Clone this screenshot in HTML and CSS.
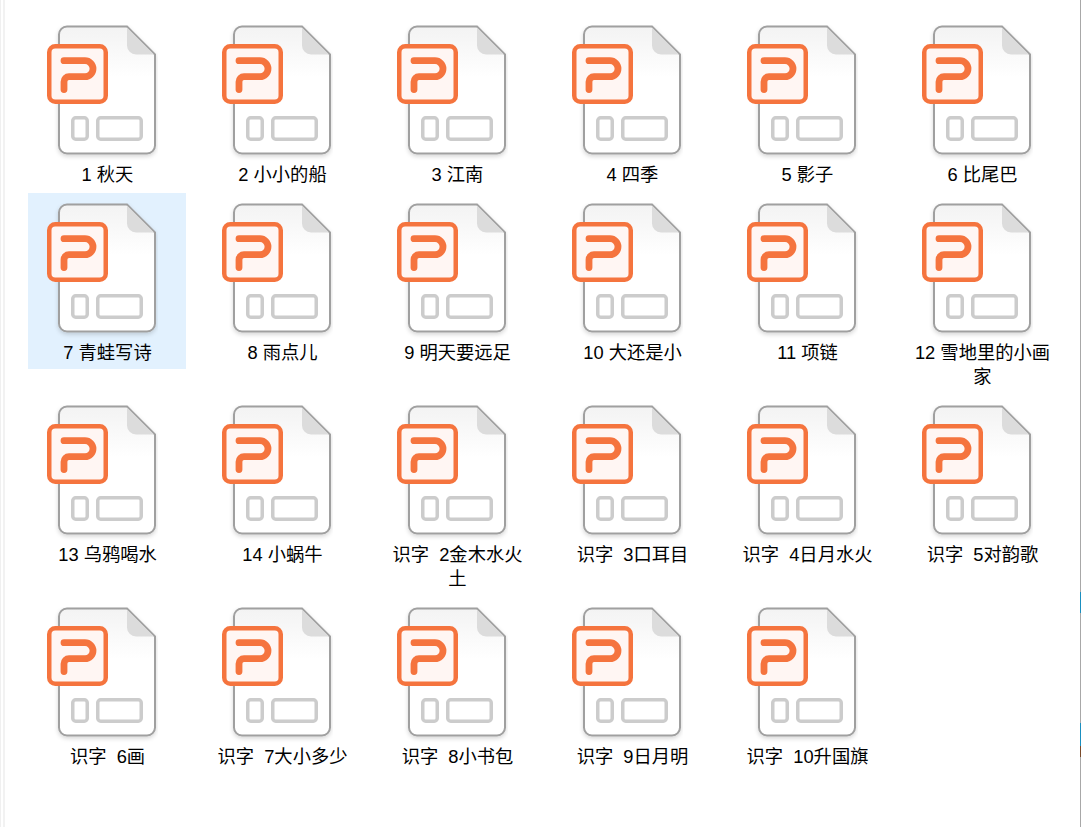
FILE: index.html
```html
<!DOCTYPE html>
<html lang="zh-CN">

<head>
  <meta charset="UTF-8">
  <title>课件</title>
  <link rel="stylesheet" href="styles.css">
</head>

<body>
  <svg class="defs" width="0" height="0">
    <defs>
      <linearGradient id="sheet-fill" x1="0" y1="0" x2="0" y2="1">
        <stop offset="0" stop-color="#f3f3f3" />
        <stop offset="0.4" stop-color="#ffffff" />
      </linearGradient>
      <filter id="sheet-shadow" x="-10%" y="-10%" width="120%" height="120%">
        <feDropShadow dx="0" dy="2" stdDeviation="2" flood-color="#000" flood-opacity="0.16" />
      </filter>
      <symbol id="ppt" viewBox="0 0 112 136">
        <!-- page -->
        <path d="M21 1.500H81L109 29.500V120.500A8 8 0 0 1 101 128.500H21A8 8 0 0 1 13 120.500V9.500A8 8 0 0 1 21 1.500Z" fill="url(#sheet-fill)" stroke="#a0a0a0" stroke-width="2" filter="url(#sheet-shadow)" />
        <path d="M81 2.500L108 29.500H90A9 9 0 0 1 81 20.500Z" fill="#dcdcdc" />
        <rect x="26.750" y="92.750" width="14.500" height="21.500" rx="3" fill="none" stroke="#cccccc" stroke-width="3.500" />
        <rect x="51.750" y="92.750" width="43.500" height="21.500" rx="3" fill="none" stroke="#cccccc" stroke-width="3.500" />
        <!-- P badge -->
        <rect x="3.250" y="21.250" width="56.500" height="55.500" rx="6" fill="#fff6f3" stroke="#f5743e" stroke-width="4.500" />
        <path d="M18 35.700H39A8 8 0 0 1 39 51.700H23A5 5 0 0 0 18 56.700V64.500" fill="none" stroke="#f5743e" stroke-width="6.800" stroke-linecap="round" />
      </symbol>
    </defs>
  </svg>

  <div class="files">
    <div class="file"><svg class="icon"><use href="#ppt" /></svg><div class="name">1 秋天</div></div>
    <div class="file"><svg class="icon"><use href="#ppt" /></svg><div class="name">2 小小的船</div></div>
    <div class="file"><svg class="icon"><use href="#ppt" /></svg><div class="name">3 江南</div></div>
    <div class="file"><svg class="icon"><use href="#ppt" /></svg><div class="name">4 四季</div></div>
    <div class="file"><svg class="icon"><use href="#ppt" /></svg><div class="name">5 影子</div></div>
    <div class="file"><svg class="icon"><use href="#ppt" /></svg><div class="name">6 比尾巴</div></div>

    <div class="file selected"><svg class="icon"><use href="#ppt" /></svg><div class="name">7 青蛙写诗</div></div>
    <div class="file"><svg class="icon"><use href="#ppt" /></svg><div class="name">8 雨点儿</div></div>
    <div class="file"><svg class="icon"><use href="#ppt" /></svg><div class="name">9 明天要远足</div></div>
    <div class="file"><svg class="icon"><use href="#ppt" /></svg><div class="name">10 大还是小</div></div>
    <div class="file"><svg class="icon"><use href="#ppt" /></svg><div class="name">11 项链</div></div>
    <div class="file"><svg class="icon"><use href="#ppt" /></svg><div class="name">12 雪地里的小画家</div></div>

    <div class="file"><svg class="icon"><use href="#ppt" /></svg><div class="name">13 乌鸦喝水</div></div>
    <div class="file"><svg class="icon"><use href="#ppt" /></svg><div class="name">14 小蜗牛</div></div>
    <div class="file"><svg class="icon"><use href="#ppt" /></svg><div class="name">识字&nbsp;&nbsp;2金木水火土</div></div>
    <div class="file"><svg class="icon"><use href="#ppt" /></svg><div class="name">识字&nbsp;&nbsp;3口耳目</div></div>
    <div class="file"><svg class="icon"><use href="#ppt" /></svg><div class="name">识字&nbsp;&nbsp;4日月水火</div></div>
    <div class="file"><svg class="icon"><use href="#ppt" /></svg><div class="name">识字&nbsp;&nbsp;5对韵歌</div></div>

    <div class="file"><svg class="icon"><use href="#ppt" /></svg><div class="name">识字&nbsp;&nbsp;6画</div></div>
    <div class="file"><svg class="icon"><use href="#ppt" /></svg><div class="name">识字&nbsp;&nbsp;7大小多少</div></div>
    <div class="file"><svg class="icon"><use href="#ppt" /></svg><div class="name">识字&nbsp;&nbsp;8小书包</div></div>
    <div class="file"><svg class="icon"><use href="#ppt" /></svg><div class="name">识字&nbsp;&nbsp;9日月明</div></div>
    <div class="file"><svg class="icon"><use href="#ppt" /></svg><div class="name">识字&nbsp;&nbsp;10升国旗</div></div>
  </div>

  <!-- sliver of the window behind, at the right edge -->
  <div class="edge"></div>
</body>

</html>
```

FILE: styles.css
```css
* {
  margin: 0;
  padding: 0;
  box-sizing: border-box;
}

html,
body {
  height: 100%;
}

body {
  background: #fff linear-gradient(to right, #f0f0f0 1px, #fff 1px, #fff 3px, #f2f2f2 3px) no-repeat;
  background-size: 5px 100%;
  font-family: "Liberation Sans", "Noto Sans CJK SC", sans-serif;
  color: #000;
  overflow: hidden;
}

.defs {
  display: block;
}

/* File grid */
.files {
  display: grid;
  grid-template-columns: repeat(6, 158px);
  align-items: start;
  column-gap: 17px;
  row-gap: 2px;
  padding: 15px 0 0 28px;
}

.file {
  padding: 10px 0 4px;
  text-align: center;
}

.file.selected {
  background-color: #e2f1fe;
}

.icon {
  display: block;
  width: 112px;
  height: 136px;
  margin: 0 0 2px 18px;
}

.name {
  width: 140px;
  margin: 0 auto;
  padding-left: 1px;
  font-size: 18.300px;
  line-height: 24px;
}

/* Right edge */
.edge {
  position: absolute;
  top: 0;
  right: 0;
  bottom: 0;
  width: 1px;
  background: linear-gradient(#a8a8a8 592px, #1a8fc0 592px, #1a8fc0 613px, #a8a8a8 613px, #a8a8a8 723px, #1a8fc0 723px, #1a8fc0 746px, #7a4a2a 746px, #7a4a2a 757px, #a8a8a8 757px);
}
```
